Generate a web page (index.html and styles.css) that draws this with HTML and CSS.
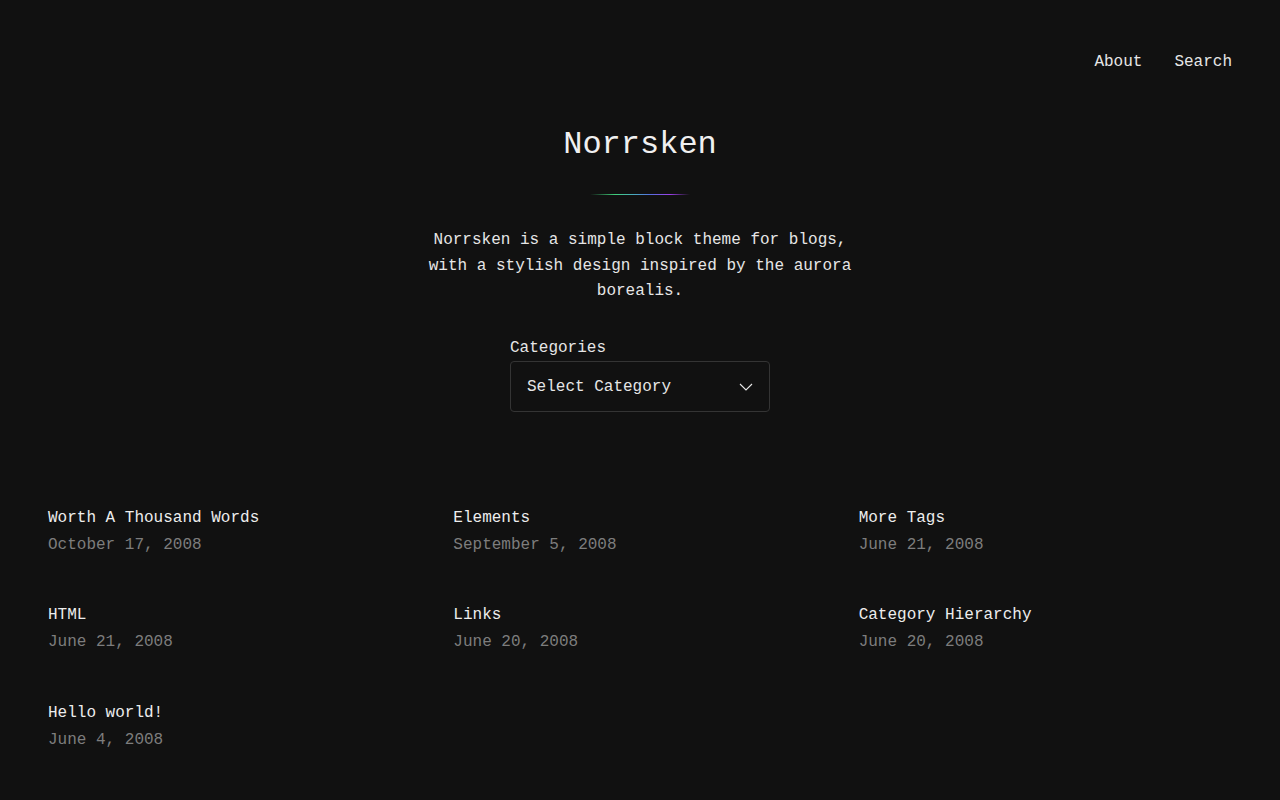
FILE: index.html
```html
<!DOCTYPE html>
<html lang="en">
<head>
<meta charset="utf-8">
<title>Norrsken</title>
<link rel="stylesheet" href="styles.css">
</head>
<body>
<header class="site-header">
  <nav class="nav">
    <a href="#" class="nav-link">About</a>
    <a href="#" class="nav-link">Search</a>
  </nav>
</header>
<main class="main">
  <section class="hero">
    <h1 class="site-title">Norrsken</h1>
    <div class="aurora-line"></div>
    <p class="tagline">Norrsken is a simple block theme for blogs, with a stylish design inspired by the aurora borealis.</p>
    <div class="categories">
      <label class="cat-label">Categories</label>
      <div class="select">
        <span>Select Category</span>
        <svg class="chevron" width="14" height="8" viewBox="0 0 14 8"><path d="M1 1 L7 7 L13 1" fill="none" stroke="#e8e8e8" stroke-width="1.1"/></svg>
      </div>
    </div>
  </section>
  <section class="posts">
    <article class="post"><a class="post-title" href="#">Worth A Thousand Words</a><div class="post-date">October 17, 2008</div></article>
    <article class="post"><a class="post-title" href="#">Elements</a><div class="post-date">September 5, 2008</div></article>
    <article class="post"><a class="post-title" href="#">More Tags</a><div class="post-date">June 21, 2008</div></article>
    <article class="post"><a class="post-title" href="#">HTML</a><div class="post-date">June 21, 2008</div></article>
    <article class="post"><a class="post-title" href="#">Links</a><div class="post-date">June 20, 2008</div></article>
    <article class="post"><a class="post-title" href="#">Category Hierarchy</a><div class="post-date">June 20, 2008</div></article>
    <article class="post"><a class="post-title" href="#">Hello world!</a><div class="post-date">June 4, 2008</div></article>
  </section>
</main>
</body>
</html>
```

FILE: styles.css
```css
* { box-sizing: border-box; }
html, body { margin: 0; padding: 0; }
body {
  background: #111111;
  color: #e6e6e6;
  font-family: "Liberation Mono", "DejaVu Sans Mono", monospace;
  font-size: 16px;
  line-height: 24px;
}
a { color: inherit; text-decoration: none; }
.site-header {
  padding: 50px 48px 0;
  display: flex;
  justify-content: flex-end;
}
.nav { display: flex; gap: 32px; }
.nav-link { color: #e6e6e6; }
.hero {
  display: flex;
  flex-direction: column;
  align-items: center;
  padding-top: 52px;
}
.site-title {
  margin: 0;
  font-size: 32px;
  line-height: 38px;
  font-weight: 400;
  color: #f0f0f0;
}
.aurora-line {
  width: 100px;
  height: 1px;
  margin-top: 30px;
  background: linear-gradient(90deg, rgba(60,180,90,0) 0%, #3fcf7a 25%, #4aa6c0 45%, #5570e0 60%, #9b40e8 80%, rgba(150,60,230,0) 100%);
}
.tagline {
  margin: 33px 0 0;
  max-width: 440px;
  text-align: center;
  line-height: 25.5px;
}
.categories {
  margin-top: 31px;
  width: 260px;
  display: flex;
  flex-direction: column;
  gap: 1px;
}
.cat-label { display: block; }
.select {
  height: 51px;
  border: 1px solid #343434;
  border-radius: 4px;
  display: flex;
  align-items: center;
  justify-content: space-between;
  padding: 2px 16px 0 16px;
}
.chevron { display: block; }
.posts {
  display: grid;
  grid-template-columns: repeat(3, 1fr);
  column-gap: 32px;
  row-gap: 46.5px;
  padding: 94px 48px 48px;
}
.post { display: flex; flex-direction: column; gap: 3px; }
.post-title { color: #ededed; }
.post-date { color: #7d7d7d; }
```
